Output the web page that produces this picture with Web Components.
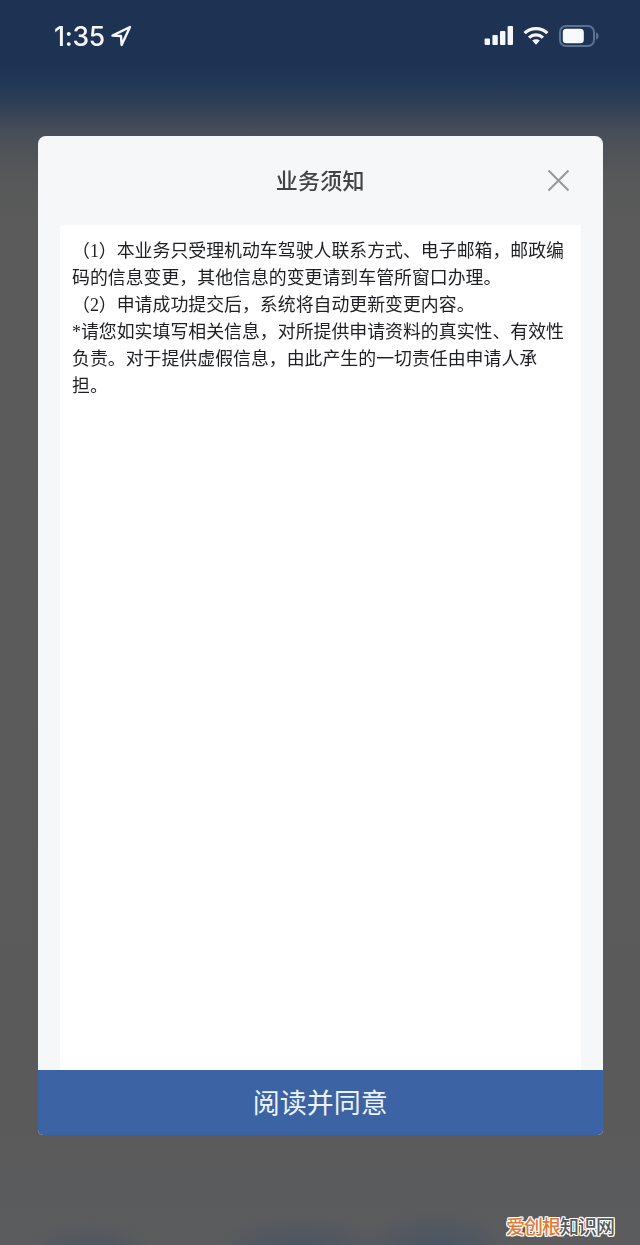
<!DOCTYPE html>
<html lang="zh-CN">
<head>
<meta charset="utf-8">
<title>业务须知</title>
<style>
html,body{margin:0;padding:0;height:1245px;overflow:hidden;}
</style>
</head>
<body>
<phone-screen>
  <status-bar slot="status" time="1:35"></status-bar>
  <notice-dialog heading="业务须知" action="阅读并同意">
    <notice-para>（1）本业务只受理机动车驾驶人联系方式、电子邮箱，邮政编码的信息变更，其他信息的变更请到车管所窗口办理。</notice-para>
    <notice-para>（2）申请成功提交后，系统将自动更新变更内容。</notice-para>
    <notice-para>*请您如实填写相关信息，对所提供申请资料的真实性、有效性负责。对于提供虚假信息，由此产生的一切责任由申请人承担。</notice-para>
  </notice-dialog>
  <water-mark slot="overlay"></water-mark>
</phone-screen>
<script>
function def(name, html, init){
  customElements.define(name, class extends HTMLElement{
    connectedCallback(){
      if(this.shadowRoot) return;
      const root=this.attachShadow({mode:'open'});
      root.innerHTML=html;
      if(init) init.call(this,root);
    }
  });
}
const CJK='"Noto Sans CJK SC","Liberation Sans",sans-serif';

def('phone-screen',`<style>
:host{display:block;position:relative;width:640px;height:1245px;overflow:hidden;
background:
 radial-gradient(ellipse 90px 36px at 300px 1250px,rgba(62,80,105,.6),transparent),
 radial-gradient(ellipse 80px 40px at 435px 1250px,rgba(62,80,105,.65),transparent),
 radial-gradient(ellipse 70px 30px at 90px 1250px,rgba(62,80,105,.45),transparent),
 linear-gradient(180deg,#1e3354 0,#1e3354 62px,#223757 82px,#2c3d56 100px,#3a4557 116px,#464d58 130px,#4f5358 150px,#575859 180px,#5b5b5b 225px,#5a5a5a 1120px,#5b5c5e 1245px);}
.col{display:flex;flex-direction:column;height:100%;}
</style>
<div class="col"><slot name="status"></slot><slot></slot></div>
<slot name="overlay"></slot>`);

def('status-bar',`<style>
:host{display:flex;justify-content:space-between;align-items:flex-start;box-sizing:border-box;height:136px;padding:20px 41px 0 54px;color:#f4f6fa;flex:none;}
.left{display:flex;align-items:center;gap:5px;height:32px;filter:blur(.3px);}
.time{font:500 26.5px/32px Inter,"Liberation Sans",sans-serif;letter-spacing:-.3px;}
.right{display:flex;align-items:center;gap:10px;height:32px;filter:blur(.3px);}
svg{display:block;}
</style>
<div class="left"><span class="time"></span>
<svg width="22" height="22" viewBox="0 0 22 22" fill="none" stroke="#f4f6fa" stroke-width="2.4" stroke-linejoin="round"><path d="M20 2 L2.5 10.6 L11 11 L11.6 20 Z"/></svg>
</div>
<div class="right">
<svg width="29" height="20" viewBox="0 0 29 20" fill="#f6f7fa"><rect x="0.6" y="12.5" width="5.4" height="6.5" rx="1"/><rect x="8.4" y="9" width="5.4" height="10" rx="1"/><rect x="16" y="5" width="5.4" height="14" rx="1"/><rect x="23.6" y="0" width="5.4" height="19" rx="1"/></svg>
<svg width="26" height="20" viewBox="0 0 26 20" fill="none" stroke="#f6f7fa" stroke-width="3.2"><path d="M1.6 7.2 C8 1 18 1 24.4 7.2"/><path d="M6 11.6 C10 8 16 8 20 11.6"/><path d="M9.2 14.6 L13 18.8 L16.8 14.6 C14.6 12.8 11.4 12.8 9.2 14.6 Z" fill="#f6f7fa" stroke="none"/></svg>
<svg width="40" height="22" viewBox="0 0 40 22" fill="none"><rect x="1" y="1" width="34" height="20" rx="6" stroke="#5d7190" stroke-width="2"/><rect x="3.8" y="3.8" width="21" height="14.4" rx="3.5" fill="#f8f9fb"/><path d="M37 7.5 C39 8 39.5 9.5 39.5 11 C39.5 12.5 39 14 37 14.5 Z" fill="#5d7190"/></svg>
</div>`,function(r){r.querySelector('.time').textContent=this.getAttribute('time');});

def('notice-dialog',`<style>
:host{display:flex;flex-direction:column;box-sizing:border-box;flex:none;width:564.5px;height:999px;margin-left:38px;background:#f6f7f9;border-radius:8px 8px 5px 5px;overflow:hidden;}
header{flex:none;height:89px;display:flex;align-items:flex-start;justify-content:center;position:relative;box-sizing:border-box;padding-top:26px;}
h1{margin:0;font:500 22px/34px ${CJK};color:#424345;letter-spacing:.2px;filter:blur(.25px);}
.close{position:absolute;right:33px;top:33px;width:23px;height:23px;display:block;}
.panel{flex:1;min-height:0;margin:0 22px 0 22px;background:#fff;box-sizing:border-box;padding:13px 10px 0 12px;font:400 17.9px/27px "Liberation Serif",${CJK};color:#1e1f22;}
.panel slot{display:block;filter:blur(.3px);}
button{flex:none;height:65px;border:0;margin:0;padding:0 0 1px;background:#3c63a3;color:#edf2f9;font:400 27px/40px ${CJK};width:100%;}
</style>
<header><h1></h1>
<svg class="close" viewBox="0 0 23 23" fill="none" stroke="#96999c" stroke-width="2"><path d="M1.5 1.5 L21.5 21.5 M21.5 1.5 L1.5 21.5"/></svg>
</header>
<div class="panel"><slot></slot></div>
<button type="button"></button>`,function(r){
  r.querySelector('h1').textContent=this.getAttribute('heading');
  r.querySelector('button').textContent=this.getAttribute('action');
});

def('notice-para',`<style>:host{display:block;}</style><slot></slot>`);

def('water-mark',`<style>
:host{position:absolute;right:26px;bottom:7px;display:block;font:500 19px/24px ${CJK};letter-spacing:-1px;white-space:nowrap;}
.a{color:#de7a38;text-shadow:1px 0 #fff,-1px 0 #fff,0 1px #fff,0 -1px #fff,1px 1px #fff,-1px -1px #fff,1px -1px #fff,-1px 1px #fff;}
.b{color:#55575a;text-shadow:1px 0 #fff,-1px 0 #fff,0 1px #fff,0 -1px #fff,1px 1px #fff,-1px -1px #fff,1px -1px #fff,-1px 1px #fff;}
</style><span class="a">爱创根</span><span class="b">知识网</span>`);
</script>
</body>
</html>
